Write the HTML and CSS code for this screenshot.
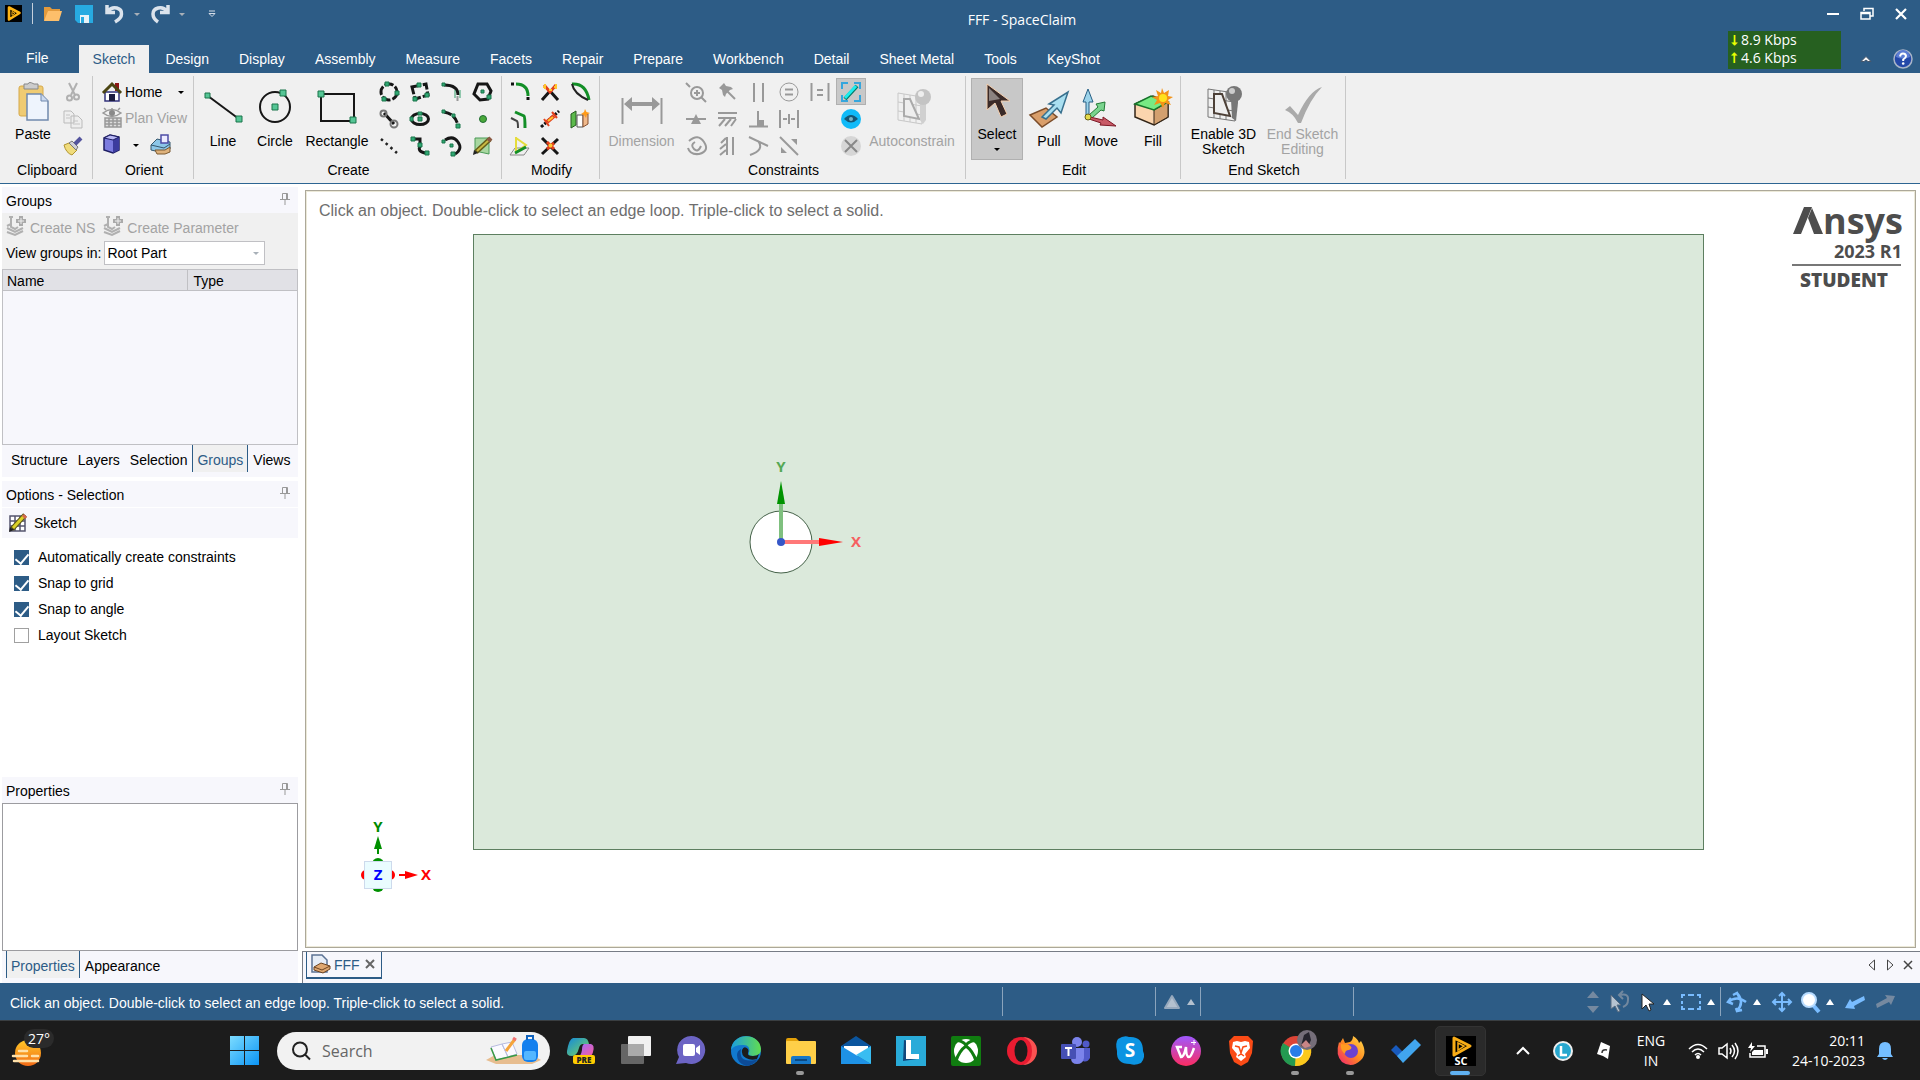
FILE: index.html
```html
<!DOCTYPE html>
<html lang="en">
<head>
<meta charset="utf-8">
<title>FFF - SpaceClaim</title>
<link rel="stylesheet" href="styles.css">
</head>
<body>
<header class="titlebar">
  <div class="title-row">
    <div class="quick">
      <svg class="app-logo" width="17" height="17" viewBox="0 0 17 17"><rect width="17" height="17"/><path d="M4 2.500 14.500 8 4 14.500z" fill="none" stroke="#fdb515" stroke-width="2.600" stroke-linejoin="round"/><path d="M7 6.500 10 8.300 7 10.300z" fill="none" stroke="#fdb515"/></svg>
      <span class="quick-line"></span>
      <button class="qa" aria-label="Open"><svg width="20" height="18" viewBox="0 0 20 18"><path d="M1 16V2h6l2 2h8v3" fill="#e39a3c"/><path d="M1 16 5 6h14l-3 10z" fill="#fdbf6b"/></svg></button>
      <button class="qa save" aria-label="Save"><svg width="18" height="18" viewBox="0 0 18 18"><path d="M0 0h18v18H3l-3-3z" fill="#27aae1"/><path d="M5 10h9v8H5z" fill="#e8f2f8"/><path d="M6 12h3v6H6z" fill="#27aae1"/></svg></button>
      <button class="qa" aria-label="Undo"><svg width="20" height="18" viewBox="0 0 20 18"><path d="M3 6C8 0 17 3 16.500 9c0 4-3 6-6.500 8M2 0v7.500h8" fill="none" stroke="#dbe3ec" stroke-width="3.500"/></svg></button>
      <span class="caret dim"></span>
      <button class="qa" aria-label="Redo"><svg width="20" height="18" viewBox="0 0 20 18"><path d="M17 6C12 0 3 3 3 9c0 4 2 6 5 8M18 0v7.500h-8" fill="none" stroke="#dbe3ec" stroke-width="3.500"/></svg></button>
      <span class="caret dim"></span>
      <button class="qa more" aria-label="Customize toolbar"><svg width="8" height="8" viewBox="0 0 8 8"><path d="M1 1h6M1 3.500h6L4 6.500z" fill="none" stroke="#d5dde8"/></svg></button>
    </div>
    <h1>FFF - SpaceClaim</h1>
    <div class="window-controls">
      <button aria-label="Minimize"><svg width="14" height="14" viewBox="0 0 14 14"><path d="M1 7h12" stroke="#fff" stroke-width="2"/></svg></button>
      <button aria-label="Restore"><svg width="14" height="14" viewBox="0 0 14 14"><path d="M4 4V1.500h9V9h-3" fill="none" stroke="#fff" stroke-width="1.500"/><path d="M1 5.500h9V12H1zM1 6.500h9" fill="none" stroke="#fff" stroke-width="1.500"/></svg></button>
      <button aria-label="Close"><svg width="14" height="14" viewBox="0 0 14 14"><path d="M2 2l10 10M12 2 2 12" stroke="#fff" stroke-width="2.200"/></svg></button>
    </div>
  </div>
  <nav class="tab-row">
    <a class="file" href="#">File</a><a class="active" href="#">Sketch</a><a href="#">Design</a><a href="#">Display</a><a href="#">Assembly</a><a href="#">Measure</a><a href="#">Facets</a><a href="#">Repair</a><a href="#">Prepare</a><a href="#">Workbench</a><a href="#">Detail</a><a href="#">Sheet Metal</a><a href="#">Tools</a><a href="#">KeyShot</a>
    <div class="tab-tools">
      <button aria-label="Collapse ribbon"><svg width="12" height="8" viewBox="0 0 12 8"><path d="M1 6.500 6 1.500l5 5H8L6 5 4 6.500z" fill="#fff" stroke="#46566b"/></svg></button>
      <button aria-label="Help"><svg width="20" height="20" viewBox="0 0 20 20"><circle cx="10" cy="10" r="9" fill="#2448a8" stroke="#a8b4c8" stroke-width="1.500"/><path d="M3 8a7 7 0 0 1 14 0q-7 3-14 0" fill="#5c7dd4"/><path d="M7 7.500q.5-3 3-3t3 2.500q0 1.800-2.800 3.500V12" fill="none" stroke="#fff" stroke-width="2"/><circle cx="10.200" cy="14.500" r="1.300" fill="#fff"/></svg></button>
    </div>
  </nav>
  <div class="net-meter"><p><b>⭣</b>8.9 Kbps</p><p><b>⭡</b>4.6 Kbps</p></div>
</header>

<section class="ribbon" aria-label="Ribbon">
  <div class="group g-clip">
    <div class="tools">
      <button class="big high"><svg width="40" height="40" viewBox="0 0 40 40"><rect x="6" y="5" width="24" height="30" rx="2" fill="#efcb73" stroke="#d6a94b"/><path d="M11 3h4q1-3 6 0h4v5H11z" fill="#ccc" stroke="#888"/><path d="M14 13h14l7 7v19H14z" fill="#eef4fd" stroke="#7089ad" stroke-width="1.500"/><path d="M28 13v7h7" fill="#cbdaf0" stroke="#7089ad"/></svg>Paste</button>
      <div class="grid c1">
        <button aria-label="Cut"><svg viewBox="0 0 20 20"><path d="M6 1 12 13M14 1 8 13" stroke="#b0b0b0" stroke-width="2"/><circle cx="6.500" cy="16" r="2.500" class="gl"/><circle cx="13.500" cy="15" r="2.500" class="gl"/></svg></button>
        <button aria-label="Copy"><svg viewBox="0 0 20 20"><path d="M1 2h7l3 3v9H1zM8 7h7l4 4v8H8z" fill="#eee" stroke="#bbb"/><path d="M3 6h4M3 9h4M10 12h5M10 15h7" stroke="#c4c4c4"/></svg></button>
        <button aria-label="Format painter"><svg viewBox="0 0 20 20"><path d="M1 9 6 7l8 7-5 5q-6-2-8-10" fill="#f0dc7c" stroke="#b09430"/><path d="M6 7l3-2 6 6-2 3z" fill="#cfcfd8" stroke="#777"/><path d="M12 8 18 2" stroke="#54549e" stroke-width="4"/></svg></button>
      </div>
    </div>
    <h2>Clipboard</h2>
  </div>
  <div class="group g-orient">
    <div class="tools stack">
      <button class="row"><svg width="20" height="20" viewBox="0 0 20 20"><path d="M13 1h4v8h-4z" fill="#8e1616"/><path d="M3 10h14v9H3z" fill="#fff" stroke="#33337c" stroke-width="1.500"/><path d="M1 11 10 2l9 9" fill="none" stroke="#4b4512" stroke-width="3"/><path d="M7 12h6v7H7z" fill="#1c1c40"/></svg>Home<span class="caret wide"></span></button>
      <button class="row" disabled><svg width="20" height="20" viewBox="0 0 20 20"><path d="M1 5q9-7 18 0-9 7-18 0zM4 2 2 0M10 2V0M16 2l2-2" fill="none" stroke="#999" stroke-width="1.500"/><circle cx="10" cy="5" r="3" fill="#8a8a8a"/><path d="M3 10h16v9H3zM3 13h16M3 16h16M7 10v9M11 10v9M15 10v9" fill="#ddd" stroke="#999" stroke-width="1.500"/></svg>Plan View</button>
      <div class="row"><button aria-label="View cube"><svg width="20" height="20" viewBox="0 0 20 20"><path d="M2 4 8 1l9 2v13l-6 3-9-3z" fill="#7c7cdf" stroke="#1d1d62" stroke-width="1.500"/><path d="M11 6v13l6-3V3z" fill="#3c3c9e"/><path d="M2 4l9 2 6-3-9-2z" fill="#b9b9f5" stroke="#1d1d62"/></svg></button><span class="caret near"></span><button aria-label="Sketch plane"><svg width="22" height="20" viewBox="0 0 22 20"><path d="M1 11 7 5l13 3v7l-6 4-13-3z" fill="#8cc6e8" stroke="#35576d"/><path d="M1 11l13 3 6-4" fill="none" stroke="#35576d"/><path d="M5 16h10l5-3v5l-5 2H7z" fill="#deb27c" stroke="#7c5a30"/><path d="M11 1h7v8h-7z" fill="#ecebff" stroke="#4c4ca5" stroke-width="1.500"/></svg></button></div>
    </div>
    <h2>Orient</h2>
  </div>
  <div class="group g-create">
    <div class="tools">
      <button class="big"><svg width="40" height="40" viewBox="0 0 40 40"><path d="M5 8 36 31" class="k2"/><path class="n" d="M2 5h5v5H2zM33 28h6v6h-6z"/></svg>Line</button>
      <button class="big"><svg width="40" height="40" viewBox="0 0 40 40"><circle cx="20" cy="19" r="15" class="k2"/><path class="n" d="M17 16h6v6h-6zM25 2h6v6h-6z"/></svg>Circle</button>
      <button class="big wide"><svg width="40" height="40" viewBox="0 0 40 40"><path d="M4 6h33v27H4z" class="k2"/><path class="n" d="M1 3h6v6H1zM33 29h6v6h-6z"/></svg>Rectangle</button>
      <div class="grid c4">
        <button aria-label="Three-point circle"><svg viewBox="0 0 20 20"><circle cx="10" cy="10" r="8" class="k3" stroke-dasharray="9 2"/><path class="n" d="M6 0h4v4H6zM16 9h4v4h-4zM3 15h4v4H3z"/></svg></button>
        <button aria-label="Three-point rectangle"><svg viewBox="0 0 20 20"><path d="M2 5 16 2l2 11-13 4z" class="k3" stroke-dasharray="9 2"/><path class="n" d="M7 1h4v4H7zM15 11h4v4h-4zM3 15h4v4H3z"/></svg></button>
        <button aria-label="Tangent arc"><svg viewBox="0 0 20 20"><path d="M3 3q14 0 14 10" class="k3"/><path d="M14 8v8M19 8v8" stroke="#35a06c"/><path d="M16.500 14v5" stroke="#999" stroke-width="2"/><path class="n" d="M1 1h3v3H1z"/></svg></button>
        <button aria-label="Polygon"><svg viewBox="0 0 20 20"><path d="M6 2h9l4 7-3 8-8 1-6-6z" class="k3"/><path class="n" d="M9 8h3v3H9zM15 13h4v4h-4z"/></svg></button>
        <button aria-label="Tangent line"><svg viewBox="0 0 20 20"><path d="M5 4 15 15" class="k3"/><circle cx="4.500" cy="4.500" r="3" fill="none" stroke="#777" stroke-width="2"/><circle cx="15" cy="15" r="3.500" fill="none" stroke="#777" stroke-width="2"/></svg></button>
        <button aria-label="Ellipse"><svg viewBox="0 0 20 20"><ellipse cx="10" cy="10" rx="8.500" ry="5.500" class="k3"/><path class="n" d="M8 3h4v3H8zM8 8h4v4H8zM0 8h3v4H0z"/></svg></button>
        <button aria-label="Three-point arc"><svg viewBox="0 0 20 20"><path d="M3 3q12 2 14 14" class="k3" stroke-dasharray="8 2"/><path class="n" d="M1 1h3v3H1zM11 5h3v3h-3zM15 15h4v4h-4z"/></svg></button>
        <button aria-label="Point"><svg viewBox="0 0 20 20"><circle cx="11" cy="10" r="3.500" fill="#4aa83a" stroke="#206d32"/></svg></button>
        <button aria-label="Construction line"><svg viewBox="0 0 20 20"><path d="M2 3 18 17" stroke="#222" stroke-width="2.500" stroke-dasharray="2.500 3.800"/></svg></button>
        <button aria-label="Spline"><svg viewBox="0 0 20 20"><path d="M3 3h7v7q-3 6 6 7" class="k3"/><path class="n" d="M1 1h4v4H1zM8 7h4v4H8zM15 15h4v4h-4z"/></svg></button>
        <button aria-label="Sweep arc"><svg viewBox="0 0 20 20"><path d="M4 4Q12-1 17 6t-3 12" class="k3"/><path class="n" d="M1 4h3v3H1zM9 8h3v3H9zM10 16h4v4h-4z"/></svg></button>
        <button aria-label="Face curve"><svg viewBox="0 0 20 20"><path d="M3 2h14v16L3 15z" fill="#a8d7a0" stroke="#4a9a56"/><path d="M4 16 18 3" stroke="#635b18" stroke-width="5"/><path d="M5 15 17 4" stroke="#c9b842" stroke-width="2"/><path d="M1 19l1-5 4 3z" fill="#222"/><path d="M16 2l3 3" stroke="#8c5a44" stroke-width="4"/></svg></button>
      </div>
    </div>
    <h2>Create</h2>
  </div>
  <div class="group g-modify">
    <div class="tools">
      <div class="grid c3">
        <button aria-label="Round corner"><svg viewBox="0 0 20 20"><path d="M6 2q12 0 12 12" class="gr"/><path d="M1 2h4M18 15v4" stroke="#111" stroke-width="3" stroke-dasharray="3 1"/></svg></button>
        <button aria-label="Trim away"><svg viewBox="0 0 20 20"><path d="M2 18 10 9l8 9" class="k3"/><path d="M4 3l6 7 6-7" fill="none" stroke="#e3401c" stroke-width="3"/><path d="M3 5h3M14 5h3M9 8h3M5 2v5M16 2v5" stroke="#ffc52e" stroke-width="2"/></svg></button>
        <button aria-label="Create corner"><svg viewBox="0 0 20 20"><path d="M2 2Q16 1 19 18" class="gr"/><path d="M2 2Q4 12 18 18" fill="none" stroke="#222" stroke-width="2"/></svg></button>
        <button aria-label="Offset curve"><svg viewBox="0 0 20 20"><path d="M5 3l9 4q1 1 1 12" class="gr"/><path d="M1 9l6 3q1 1 1 7" fill="none" stroke="#444" stroke-width="2"/></svg></button>
        <button aria-label="Split curve"><svg viewBox="0 0 20 20"><path d="M1 18 19 2" class="k3" stroke-dasharray="3 1.500"/><path d="M7 13 14 7" stroke="#e3401c" stroke-width="4"/><path d="M4 10l5 7M12 3l5 6" stroke="#e3401c" stroke-width="2"/><path d="M8 12 13 8" stroke="#ffc52e" stroke-width="2"/></svg></button>
        <button aria-label="Project to sketch"><svg viewBox="0 0 20 20"><path d="M1 5l5-3v14l-5 3z" fill="#5cba4c" stroke="#275b20"/><path d="M7 6h6v12H7z" fill="#fff" stroke="#555"/><path d="M13 5h5v10l-5 3z" fill="#f0b98b" stroke="#875031"/><path d="M15 0l1.500 3L20 4l-3 1.500L16 9l-2-3-3-1 3-2z" fill="#ff9b19"/></svg></button>
        <button aria-label="Bend"><svg viewBox="0 0 20 20"><path d="M5 12h14l-5 7H0z" fill="#eee" stroke="#888"/><path d="M6 1v15L16 9 6 2" fill="none" stroke="#e5dc3c" stroke-width="2"/><path d="M5 17 16 11" class="gr"/></svg></button>
        <button aria-label="Scale"><svg viewBox="0 0 20 20"><path d="M2 18 18 3M2 2l16 16" class="k3"/><path d="M7 6l7 7M7 13l7-6" stroke="#e3401c" stroke-width="3"/><circle cx="10.500" cy="9.500" r="2" fill="#ffc52e"/></svg></button>
      </div>
    </div>
    <h2>Modify</h2>
  </div>
  <div class="group g-constraints">
    <div class="tools">
      <button class="big dim-btn" disabled><svg width="42" height="40" viewBox="0 0 42 40"><path d="M1.500 10v26M40.500 10v26" class="gs"/><path d="M8 16h26" stroke="#999" stroke-width="4"/><path d="M3 16 11 9v14zM39 16 31 9v14z" fill="#999"/></svg>Dimension</button>
      <div class="grid c6">
        <button disabled aria-label="Inspect"><svg viewBox="0 0 20 20"><circle cx="11" cy="11" r="6" class="gs"/><path d="M15 15l5 5M0 1l4 4M8 11h6M11 8v6" class="gs"/></svg></button>
        <button disabled aria-label="Fix"><svg viewBox="0 0 20 20"><path d="M2 6 7 1l2 3 5 1 2 2-3 1-4 4-1 3-2-2-1-5z" fill="#999"/><path d="M10 9l8 8" class="gs"/></svg></button>
        <button disabled aria-label="Parallel"><svg viewBox="0 0 20 20"><path d="M6 1v19M15 1v19" class="gs"/></svg></button>
        <button disabled aria-label="Equal radius"><svg viewBox="0 0 20 20"><circle cx="10" cy="10" r="9" class="gs thin"/><path d="M6 7.500h8M6 12.500h8" class="gs"/></svg></button>
        <button disabled aria-label="Equal distance"><svg viewBox="0 0 20 20"><path d="M1.500 1v18M18.500 1v18M7 8h6M7 13h6" class="gs"/></svg></button>
        <button class="toggle" aria-label="Toggle constraints"><svg viewBox="0 0 20 20"><path d="M1 7V1h6M13 1h6v6M19 13v6h-6M7 19H1v-6" fill="none" stroke="#35a6dd" stroke-width="2"/><path d="M4 17 16 4" stroke="#076" stroke-width="4"/><path d="M4 16 15 4" stroke="#1cecec" stroke-width="3"/></svg></button>
        <button disabled aria-label="Midpoint"><svg viewBox="0 0 20 20"><path d="M0 10h20" class="gs"/><path d="M5 15l5-10 5 10z" fill="#999"/></svg></button>
        <button disabled aria-label="Horizontal"><svg viewBox="0 0 20 20"><path d="M1 4h19M1 9h18M8 10l-6 7M14 10l-6 7M19 10l-5 7" class="gs"/></svg></button>
        <button disabled aria-label="Perpendicular"><svg viewBox="0 0 20 20"><path d="M1 17.500h19M10 2v15" class="gs"/><path d="M10 11h6v7h-6z" fill="#999"/></svg></button>
        <button disabled aria-label="Symmetric"><svg viewBox="0 0 20 20"><path d="M1 1v18M19 1v18M10 5v10M4 10h4M12 10h4" class="gs"/></svg></button>
        <span></span>
        <button aria-label="Show constraints"><svg viewBox="0 0 20 20"><circle cx="10" cy="10" r="10" fill="#10baf8"/><path d="M3 10q7-8 14 0-7 7-14 0" fill="#165674"/><circle cx="10" cy="10" r="2" fill="#79b3c5"/></svg></button>
        <button disabled aria-label="Concentric"><svg viewBox="0 0 20 20"><path d="M3 5Q12-3 18 6t-5 12Q4 19 2 12M9 6q-5 3-1 7t7-3" class="gs"/></svg></button>
        <button disabled aria-label="Vertical"><svg viewBox="0 0 20 20"><path d="M16 1v18M10 1v18M9 2 4 7M9 8l-6 5M9 14l-6 5" class="gs"/></svg></button>
        <button disabled aria-label="Tangent"><svg viewBox="0 0 20 20"><path d="M1 1l19 9M2 19q15-5 8-14" class="gs"/></svg></button>
        <button disabled aria-label="Equal"><svg viewBox="0 0 20 20"><path d="M1 1l18 18" class="gs"/><path d="M12 3h6v6zM2 11v6h6z" fill="#999"/></svg></button>
        <span></span>
        <button disabled aria-label="Delete constraints"><svg viewBox="0 0 20 20"><circle cx="10" cy="10" r="10" fill="#d6d6d6"/><path d="M4 4l12 12M16 4 4 16" stroke="#888" stroke-width="2"/></svg></button>
      </div>
      <button class="big auto" disabled><svg width="40" height="40" viewBox="0 0 40 40"><path d="M6 5v27l24 4V9zM12 6v27M18 7v27M24 8v27M6 14l24 4M6 23l24 4" fill="none" stroke="#c8c8c8"/><path d="M12 11h6l9 20-15-3z" fill="#eee" stroke="#aaa" stroke-width="2"/><path d="M28 14h6v18l-3 4-3-4z" fill="#d0d0d0"/><circle cx="31" cy="9" r="8" fill="#c4c4c4"/><circle cx="29" cy="6" r="3" fill="#eee"/></svg>Autoconstrain</button>
    </div>
    <h2>Constraints</h2>
  </div>
  <div class="group g-edit">
    <div class="tools">
      <button class="big high pressed"><svg width="40" height="40" viewBox="0 0 40 40"><path d="M10 3v26l8-7 6 14 6-3-6-13h9z" fill="#3a2a28" stroke="#f5cfae"/><path d="M12 7v13l11-2z" fill="#8c8280"/></svg>Select<span class="caret"></span></button>
      <button class="big"><svg width="40" height="40" viewBox="0 0 40 40"><path d="M1 27 17 20l11 9-15 10z" fill="#d99e6a" stroke="#7b4c29" stroke-width="1.500"/><path d="M13 29 25 17l-5-1L39 4 32 25l-4-5-11 11z" fill="#a9dff0" stroke="#38708e" stroke-width="1.500"/></svg>Pull</button>
      <button class="big"><svg width="40" height="40" viewBox="0 0 40 40"><path d="M5 28V14H2L7 1l5 13H8v14z" fill="#9cd3ea" stroke="#275f84"/><path d="M8 27l9-8-2-3 9-2-1 9-3-1-9 8z" fill="#7ad48e" stroke="#237a36"/><path d="M9 29l13 3v-3l13 9-16-1 1-2-12-4z" fill="#c95a66" stroke="#7e1926"/><circle cx="7" cy="29" r="3" fill="#e3da4b" stroke="#665f18"/></svg>Move</button>
      <button class="big"><svg width="40" height="40" viewBox="0 0 40 40"><path d="M2 16 20 8l15 6v15l-14 8L2 29z" fill="#fbd5ae" stroke="#322518" stroke-width="1.500"/><path d="M21 22v15l14-8V14z" fill="#d3a06f" stroke="#322518"/><path d="M2 16 18 8l17 6-14 8z" fill="#77eb83" stroke="#17742a" stroke-width="1.500"/><path d="M29 0l2 5 5-3-1 6 5 1-5 3 3 5-6-2-2 5-3-5-6 2 3-5-5-3 6-1-2-6 5 3z" fill="#f39317"/><circle cx="30" cy="10" r="4" fill="#ffe11b"/></svg>Fill</button>
    </div>
    <h2>Edit</h2>
  </div>
  <div class="group g-end">
    <div class="tools">
      <button class="big high end-btn"><svg width="40" height="40" viewBox="0 0 40 40"><path d="M4 4v28l27 4V8zM10 5v28M16 6v28M22 7v28M4 13l26 4M4 22l26 4" fill="none" stroke="#777"/><path d="M10 9h8l8 22-16-3z" fill="#eee" stroke="#4d4037" stroke-width="2"/><path d="M27 14h7v4l-2 18-4-3z" fill="#777"/><circle cx="30" cy="9" r="8" fill="#777"/><circle cx="28" cy="6" r="3" fill="#ccc"/></svg>Enable 3D<br>Sketch</button>
      <button class="big high end-btn" disabled><svg width="40" height="40" viewBox="0 0 40 40"><path d="M2 25l5-4 8 9Q26 6 39 2 27 14 18 38h-3Q10 28 2 25z" fill="#aaa"/></svg>End Sketch<br>Editing</button>
    </div>
    <h2>End Sketch</h2>
  </div>
</section>

<main class="workspace">
  <aside class="side">
    <section class="groups-panel">
      <header class="panel-head"><h3>Groups</h3><button class="pin" aria-label="Pin Groups"><svg width="10" height="12" viewBox="0 0 10 12"><path d="M2.500 6V.500h5V6M6.500 1v5M0 6.500h10M5 7v5" fill="none" stroke="#999"/></svg></button></header>
      <div class="group-tools">
        <button disabled><svg width="20" height="20" viewBox="0 0 20 20"><path d="M1 10l4-2M1 12l8 4 8-4M1 16l8 3 8-4M5 1v10l4 2 3-2M3 1h4" fill="none" stroke="#b0b0b0" stroke-width="2"/><path d="M15 0v10M10 5h10" stroke="#aaa" stroke-width="4"/><path d="M15 2v6M12 5h6" stroke="#eee"/></svg>Create NS</button>
        <button disabled><svg width="20" height="20" viewBox="0 0 20 20"><path d="M1 10l4-2M1 12l8 4 8-4M1 16l8 3 8-4M5 1v10l4 2 3-2M3 1h4" fill="none" stroke="#b0b0b0" stroke-width="2"/><path d="M15 0v10M10 5h10" stroke="#aaa" stroke-width="4"/><path d="M15 2v6M12 5h6" stroke="#eee"/></svg>Create Parameter</button>
      </div>
      <div class="view-row"><label for="scope">View groups in:</label><div class="combo"><select id="scope"><option>Root Part</option></select><span class="caret dim"></span></div></div>
      <div class="list"><table><thead><tr><th>Name</th><th>Type</th></tr></thead></table></div>
      <nav class="side-tabs"><a href="#">Structure</a><a href="#">Layers</a><a href="#">Selection</a><a class="on" href="#">Groups</a><a href="#">Views</a></nav>
    </section>
    <section class="options-panel">
      <header class="panel-head"><h3>Options - Selection</h3><button class="pin" aria-label="Pin Options"><svg width="10" height="12" viewBox="0 0 10 12"><path d="M2.500 6V.500h5V6M6.500 1v5M0 6.500h10M5 7v5" fill="none" stroke="#999"/></svg></button></header>
      <div class="sketch-head"><svg width="20" height="20" viewBox="0 0 20 20"><path d="M2 3h15v15H2zM7 3v15M12 3v15M2 8h15M2 13h15" fill="#fff" stroke="#55556e" stroke-width="1.500"/><path d="M4 16 17 2" stroke="#5b5415" stroke-width="5"/><path d="M5 15 16 3" stroke="#dbd228" stroke-width="3"/><path d="M1 19l1-5 4 3z" fill="#222"/><path d="M15 2l3 3" stroke="#d4674e" stroke-width="3"/></svg>Sketch</div>
      <div class="checks">
        <label><input type="checkbox" checked>Automatically create constraints</label>
        <label><input type="checkbox" checked>Snap to grid</label>
        <label><input type="checkbox" checked>Snap to angle</label>
        <label><input type="checkbox">Layout Sketch</label>
      </div>
    </section>
    <section class="props-panel">
      <header class="panel-head"><h3>Properties</h3><button class="pin" aria-label="Pin Properties"><svg width="10" height="12" viewBox="0 0 10 12"><path d="M2.500 6V.500h5V6M6.500 1v5M0 6.500h10M5 7v5" fill="none" stroke="#999"/></svg></button></header>
      <div class="props-box"></div>
      <nav class="side-tabs"><a class="on" href="#">Properties</a><a href="#">Appearance</a></nav>
    </section>
  </aside>
  <section class="document">
    <div class="canvas">
      <svg class="drawing" width="100%" height="100%">
        <rect x="167.500" y="43.500" width="1230" height="615" fill="#dbe9db" stroke="#5d7f60"/>
        <g transform="translate(475 351)">
          <circle r="31" fill="#fff" stroke="#446148"/>
          <path d="M0 0v-40" stroke="#7fc07f" stroke-width="4"/><path d="M0-61l4 23h-8z" fill="#009300"/>
          <path d="M0 0h40" stroke="#ff7878" stroke-width="4"/><path d="M62 0 38 4v-8z" fill="#f00"/>
          <circle r="4" fill="#3657c8"/>
          <text y="-70" class="axis" fill="#55a855">Y</text><text x="75" y="5" class="axis" fill="#f66060">X</text>
        </g>
        <g transform="translate(72 684)">
          <circle cy="-11" r="6" fill="#009000"/><circle cy="11" r="6" fill="#009000"/><circle cx="-12" r="5" fill="#f00"/><circle cx="12" r="5" fill="#f00"/>
          <rect x="-13.500" y="-13.500" width="27" height="27" fill="#eafcff" stroke="#cddaec"/>
          <path d="M0-21v-7" stroke="#009000" stroke-width="2"/><path d="M0-39l4 13h-8z" fill="#009000"/>
          <path d="M21 0h7" stroke="#f00" stroke-width="2"/><path d="M40 0 27 4v-8z" fill="#f00"/>
          <text y="-43" class="axis" fill="#008a00">Y</text><text x="48" y="5" class="axis" fill="#f00">X</text><text y="5" class="axis" fill="#00f">Z</text>
        </g>
      </svg>
      <p class="hint">Click an object. Double-click to select an edge loop. Triple-click to select a solid.</p>
      <svg class="brand" width="114" height="90" viewBox="0 0 114 90" aria-label="Ansys 2023 R1 Student">
        <path d="M1 32 12 5h8L9 32zM20 6l11 26H22L16 16z" fill="#4d4d4d"/>
        <text x="31" y="32" class="b1">nsys</text><text x="110" y="56" class="b2">2023 R1</text>
        <path d="M0 63h109" stroke="#777" stroke-width="2"/><text x="96" y="85" class="b3">STUDENT</text>
      </svg>
    </div>
    <div class="doc-bar">
      <div class="doc-tab"><svg width="20" height="20" viewBox="0 0 20 20"><path d="M1 1h10l5 5v12H1z" fill="#e6edf7" stroke="#5c7394" stroke-width="1.500"/><path d="M3 13l7-4 9 3v3l-7 4-9-3z" fill="#dfa770" stroke="#6d4421"/><path d="M3 13l8 3 8-4" fill="none" stroke="#6d4421"/></svg><a href="#">FFF</a><button aria-label="Close FFF"><svg width="10" height="10" viewBox="0 0 10 10"><path d="M1 1l8 8M9 1 1 9" stroke="#666" stroke-width="2"/></svg></button></div>
      <div class="doc-nav">
        <button aria-label="Previous"><svg width="10" height="12" viewBox="0 0 10 12"><path d="M7.500 1v10L2 6z" fill="none" stroke="#444"/></svg></button>
        <button aria-label="Next"><svg width="10" height="12" viewBox="0 0 10 12"><path d="M2.500 1v10L8 6z" fill="none" stroke="#444"/></svg></button>
        <button aria-label="Close document"><svg width="10" height="12" viewBox="0 0 10 12"><path d="M1 2l8 8M9 2l-8 8" stroke="#444" stroke-width="1.500"/></svg></button>
      </div>
    </div>
  </section>
</main>

<footer class="status">
  <p>Click an object. Double-click to select an edge loop. Triple-click to select a solid.</p>
  <span class="seg long"></span>
  <span class="seg warn"><svg width="18" height="16" viewBox="0 0 18 16"><path d="M9 2 16 14H2z" fill="#b4c1cf" stroke="#97a9bd" stroke-width="2" stroke-linejoin="round"/></svg><span class="up pale"></span></span>
  <span class="seg long"></span>
  <div class="seg view-tools">
    <button aria-label="Scroll selection"><svg viewBox="0 0 20 22"><path d="M10 0l6 7H4zM10 22l6-7H4z" fill="#7589a0"/></svg></button>
    <button aria-label="Undo selection"><svg viewBox="0 0 20 22"><path d="M1 4v14l4-3 3 6 2-1-3-6h4z" fill="#b6c3d0" stroke="#576b80"/><path d="M10 4q9-2 8 5 0 5-5 7M13 0l-4 4 4 4" fill="none" stroke="#72889f" stroke-width="2"/></svg></button>
    <button aria-label="Select mode"><svg viewBox="0 0 20 22"><path d="M5 3v15l4-4 3 6 2-1-2-6h5z" fill="#fff" stroke="#222"/></svg></button><span class="up"></span>
    <button class="box-mode" aria-label="Box select"><svg viewBox="0 0 20 22"><path d="M1 7V4h3M7 4h6M16 4h3v3M19 10v3M19 15v3h-3M13 18H7M4 18H1v-3M1 13v-3" fill="none" stroke="#79bcff" stroke-width="2"/></svg></button><span class="up"></span>
    <span class="divider"></span>
    <button aria-label="Spin"><svg viewBox="0 0 20 22"><path d="M1 11q9-7 18 0M10 2q8 9 0 18M4 7l-3 4 5 2M6 4l4-2 2 4M9 17l1 3 5-1" fill="none" stroke="#79bcff" stroke-width="2.500"/></svg></button><span class="up"></span>
    <button class="pan" aria-label="Pan"><svg viewBox="0 0 20 22"><path d="M10 2v18M1 11h18M7 5l3-3 3 3M7 17l3 3 3-3M4 8l-3 3 3 3M16 8l3 3-3 3" fill="none" stroke="#79bcff" stroke-width="2"/></svg></button>
    <button class="zoom" aria-label="Zoom"><svg viewBox="0 0 20 22"><path d="M13 14l6 7" stroke="#79bcff" stroke-width="4"/><circle cx="9" cy="9" r="7" fill="#fff" stroke="#b6dbff" stroke-width="2"/></svg></button><span class="up"></span>
    <button class="pan" aria-label="Previous view"><svg viewBox="0 0 20 22"><path d="M0 17l5-9 2 3 12-6 1 4-11 6 1 3z" fill="#79bcff"/></svg></button>
    <button class="pan" aria-label="Next view"><svg viewBox="0 0 20 22"><path d="M20 5 10 4l2 3-11 6 1 4 12-6 2 3z" fill="#7589a0"/></svg></button>
  </div>
</footer>

<nav class="taskbar" aria-label="Taskbar">
  <div class="weather"><svg width="42" height="40" viewBox="0 0 42 40"><defs><linearGradient id="sun" x2="0" y2="1"><stop stop-color="#ffc928"/><stop offset="1" stop-color="#f26a16"/></linearGradient></defs><circle cx="16" cy="22" r="13" fill="url(#sun)"/><path d="M7 20h8M1 25h14M20 25h6M2 30h24" stroke="#ffe0a8" stroke-width="2.500" stroke-linecap="round"/></svg><span>27°</span></div>
  <button class="cell" aria-label="Start"><svg width="30" height="30" viewBox="0 0 30 30"><defs><linearGradient id="win" x2="1" y2="1"><stop stop-color="#7cdcff"/><stop offset="1" stop-color="#0b94f5"/></linearGradient></defs><path d="M0 0h14v14H0zM15 0h14v14H15zM0 15h14v14H0zM15 15h14v14H15z" fill="url(#win)"/></svg></button>
  <div class="search"><svg width="20" height="20" viewBox="0 0 20 20"><circle cx="9" cy="8.500" r="7" fill="none" stroke="#222" stroke-width="2"/><path d="M14 13.500l5 5" stroke="#222" stroke-width="2"/></svg><input type="text" placeholder="Search" aria-label="Search">
    <svg width="60" height="34" viewBox="0 0 60 34"><path d="M2 26l9-5h37l9 5-9 4H12z" fill="#e7bd8f"/><path d="M7 13l11-3 6 13-12 3zM18 10l10-2 5 12-9 3z" fill="#fbfaff" stroke="#b8bce0"/><path d="M7 14l5 12 21-5" fill="none" stroke="#399a45" stroke-width="1.500"/><path d="M22 17 31 5" stroke="#f5a43a" stroke-width="3"/><path d="M29 4l3 2" stroke="#f27272" stroke-width="3"/><rect x="38" y="5" width="16" height="23" rx="6" fill="#1480ee"/><rect x="40" y="17" width="12" height="9" rx="2" fill="#54b7ff"/><path d="M43 6V2h6v4" fill="none" stroke="#0f62bd" stroke-width="2"/></svg></div>
  <button class="cell" aria-label="Copilot"><svg viewBox="0 0 30 30"><defs><linearGradient id="cpa" x2="1" y2="1"><stop stop-color="#1389dd"/><stop offset="1" stop-color="#7dd957"/></linearGradient><linearGradient id="cpb" x2="1" y2="1"><stop stop-color="#9b6cff"/><stop offset="1" stop-color="#fa5b9b"/></linearGradient></defs><path d="M7 2h11q4 0 5 6h-6q-3 0-4 4-2 8-7 8-6 0-5-5Q3 3 7 2z" fill="url(#cpa)"/><path d="M18 8h7q4 1 2 8-1 5-6 5H12q3-1 4-7 0-5 2-6z" fill="url(#cpb)"/><rect x="7" y="19" width="22" height="9" rx="2" fill="#fc0"/><text x="18" y="27" class="pre">PRE</text></svg></button>
  <button class="cell" aria-label="Task view"><svg viewBox="0 0 30 30"><rect x="7" y="0" width="23" height="20" rx="1" fill="#f1f1f1"/><rect x="0" y="8" width="23" height="20" rx="1" fill="#666"/><path d="M7 8h16v12H7z" fill="#aaa"/></svg></button>
  <button class="cell" aria-label="Chat"><svg viewBox="0 0 30 30"><path d="M15 0a14 14 0 1 1-5 27L0 28l3-7A14 14 0 0 1 15 0z" fill="#6c64c4"/><rect x="7" y="8" width="12" height="12" rx="2" fill="#fff"/><path d="M20 12l4-3v10l-4-3z" fill="#fff"/></svg></button>
  <button class="cell" aria-label="Edge"><svg viewBox="0 0 30 30"><defs><linearGradient id="edg" x2="1"><stop stop-color="#1a9de0"/><stop offset="1" stop-color="#62dd4f"/></linearGradient></defs><circle cx="15" cy="15" r="15" fill="#1179ce"/><path d="M0 14C1-4 29-4 30 13q0 7-8 7-5 0-4-3 2-9-7-8Q3 9 0 14z" fill="url(#edg)"/><path d="M10 13q-3 14 14 11 3-1 3-1-5 7-12 7-9-3-9-11 0-4 4-6z" fill="#0c4b97"/><path d="M11 14q2-5 6-1 1 2 0 4-1 3 5 3 4 0 6-2l-2 5q-6 2-11-1t-4-8z" fill="#1c1c1c"/></svg></button>
  <button class="cell run" aria-label="File Explorer"><svg viewBox="0 0 30 30"><path d="M0 4q0-2 2-2h8l3 3v5H0z" fill="#e3a008"/><rect y="5" width="30" height="23" rx="1" fill="#ffcf48"/><path d="M5 28v-6q0-2 2-2h16q2 0 2 2v6z" fill="#1778c8"/><path d="M9 24h12" stroke="#0c4a83" stroke-width="2"/></svg></button>
  <button class="cell" aria-label="Mail"><svg viewBox="0 0 30 30"><path d="M0 10 15 0l15 10v18H0z" fill="#0b559e"/><path d="M3 10h24v10H3z" fill="#fff"/><path d="M0 10l30 18H0z" fill="#1e92e6"/><path d="M30 10v18L15 19z" fill="#39bdf1"/></svg></button>
  <button class="cell" aria-label="L app"><svg viewBox="0 0 30 30"><path d="M0 0h30v30H0z" fill="#29abd9"/><path d="M8 4l4 1v16l9 2-14 2z" fill="#12487c"/><path d="M10 4h5v14h8v5H10z" fill="#fff"/></svg></button>
  <button class="cell" aria-label="Xbox"><svg viewBox="0 0 30 30"><rect width="30" height="30" rx="2" fill="#107c10"/><circle cx="15" cy="15" r="12" fill="#fff"/><path d="M6 5q4-1 9 4 5-5 9-4M5 25Q8 15 15 10q7 5 10 15" fill="none" stroke="#107c10" stroke-width="3"/></svg></button>
  <button class="cell" aria-label="Opera"><svg viewBox="0 0 30 30"><circle cx="15" cy="15" r="14" fill="#e91c31"/><path d="M17 1a14 14 0 0 1 0 28q9-3 9-14T17 1" fill="#fa5252"/><ellipse cx="15" cy="15" rx="6.500" ry="11" fill="#1c1c1c"/></svg></button>
  <button class="cell" aria-label="Teams"><svg viewBox="0 0 30 30"><circle cx="16" cy="6" r="5" fill="#7b83eb"/><circle cx="25" cy="8" r="3.500" fill="#5059c9"/><path d="M20 12h9v10q-3 5-7 3z" fill="#5059c9"/><path d="M10 12h13v10q-1 6-7 6t-6-6z" fill="#7b83eb"/><rect x="0" y="8" width="15" height="15" rx="1" fill="#4650b5"/><path d="M4 12h7M7.500 12v8" stroke="#fff" stroke-width="2"/></svg></button>
  <button class="cell" aria-label="Skype"><svg viewBox="0 0 30 30"><path d="M2 3q6-4 11-2 14-1 14 14 3 6-2 12-6 3-11 1Q0 28 1 15-1 7 2 3z" fill="#0c94e2"/><text x="14" y="21" class="skype">S</text></svg></button>
  <button class="cell" aria-label="WPS"><svg viewBox="0 0 30 30"><defs><linearGradient id="wps" x2="0" y2="1"><stop stop-color="#9f58ff"/><stop offset="1" stop-color="#fc2c61"/></linearGradient></defs><circle cx="15" cy="15" r="15" fill="url(#wps)"/><path d="M11 11H6l4 10q3 0 5-10 0 10 3 10 2 0 5-9" fill="none" stroke="#fff" stroke-width="2.500"/><path d="M23 4v5M20 6.500h5" stroke="#fff"/></svg></button>
  <button class="cell" aria-label="Brave"><svg viewBox="0 0 30 30"><path d="M8 0h14l5 5-1 12-4 9-7 4-7-4-4-9L3 5z" fill="#fb4b16"/><path d="M7 6l4-1 4 1 4-1 4 1 1 6-5 6 1 3-5 4-5-4 1-3-5-6z" fill="#fff"/><path d="M9 10l4 1 2 6 2-6 4-1M12 20l3-2 3 2" fill="none" stroke="#fb4b16" stroke-width="1.500"/></svg></button>
  <button class="cell run" aria-label="Chrome"><svg class="chrome" viewBox="0 0 36 36"><circle cx="15" cy="21" r="15" fill="#dc4436"/><path d="M15 21 2 13a15 15 0 0 0 13 23l7-11z" fill="#249a51"/><path d="M15 21l-1 15a15 15 0 0 0 15-21H17z" fill="#fbc91d"/><circle cx="15" cy="21" r="7.500" fill="#fff"/><circle cx="15" cy="21" r="6" fill="#287de7"/><circle cx="26" cy="10" r="10" fill="#756e79"/><path d="M23 5l5-3 2 8-3 7-7-1z" fill="#26242d"/><path d="M20 15l5-5 5 6-6 2z" fill="#c98585"/></svg></button>
  <button class="cell run" aria-label="Firefox"><svg viewBox="0 0 30 30"><defs><linearGradient id="ffx" x1="1" x2="0" y2="1"><stop stop-color="#ffe14d"/><stop offset=".5" stop-color="#ff8920"/><stop offset="1" stop-color="#f01b79"/></linearGradient></defs><path d="M4 7l3-5 2 5 5-1q3-2 3-6 5 3 6 7l2-2q7 12 0 19-9 9-19 2Q-1 19 3 6z" fill="url(#ffx)"/><circle cx="15" cy="15" r="7" fill="#6a42cf"/><path d="M5 8l8 1q5 3 0 5-4 0-4 4Q4 14 5 8" fill="#ff9b22"/></svg></button>
  <button class="cell" aria-label="To Do"><svg viewBox="0 0 30 30"><path d="M0 14l5-5 9 9-5 5z" fill="#185abd"/><path d="M6 20 24 3l6 6-18 18z" fill="#41a5ee"/></svg></button>
  <button class="cell current" aria-label="SpaceClaim"><svg viewBox="0 0 30 30"><path d="M0 0h30v30H0z" fill="#000"/><path d="M8 2l16 8L8 19z" fill="none" stroke="#f9ad16" stroke-width="3" stroke-linejoin="round"/><path d="M12 7l6 3-6 4z" fill="none" stroke="#f9ad16" stroke-width="1.500"/><text x="15" y="29" class="sc">SC</text></svg></button>
  <div class="tray">
    <button aria-label="Hidden icons"><svg width="16" height="20" viewBox="0 0 16 20"><path d="M2 13l6-6 6 6" fill="none" stroke="#fff" stroke-width="2"/></svg></button>
    <button aria-label="L status"><svg width="20" height="20" viewBox="0 0 20 20"><circle cx="10" cy="10" r="9" fill="#27a7cf" stroke="#eee" stroke-width="2"/><path d="M8 5v9h6" fill="none" stroke="#fff" stroke-width="2.500"/></svg></button>
    <button aria-label="Device"><svg width="16" height="20" viewBox="0 0 16 20"><path d="M6 1l9 4-2 13-5-3-6-2z" fill="#fff"/><path d="M7 12q0-4 5-3" fill="none" stroke="#333" stroke-width="1.500"/></svg></button>
    <div class="lang">ENG<br>IN</div>
    <button class="net" aria-label="Network and battery"><svg width="20" height="20" viewBox="0 0 20 20"><path d="M1 8q9-9 18 0M4 11q6-6 12 0M7 14q3-3 6 0" fill="none" stroke="#fff" stroke-width="1.500"/><circle cx="10" cy="16" r="2" fill="#fff"/></svg><svg width="20" height="20" viewBox="0 0 20 20"><path d="M1 7h3l5-4v14l-5-4H1zM12 7q2 3 0 6M14 4q5 6 0 12M17 2q6 8 0 16" fill="none" stroke="#fff" stroke-width="1.500"/></svg><svg width="20" height="20" viewBox="0 0 20 20"><path d="M9 5h8v11H2v-4" fill="none" stroke="#fff" stroke-width="1.500"/><path d="M6 9h9v5H4v-3zM18 8h2v5h-2zM4 1 0 7h3L2 11l5-6H4z" fill="#fff"/></svg></button>
    <div class="clock">20:11<br>24-10-2023</div>
    <button aria-label="Notifications"><svg width="16" height="20" viewBox="0 0 16 20"><path d="M0 16l2-3V8q0-7 6-7t6 7v5l2 3z" fill="#75beff"/><path d="M5 17q3 4 6 0z" fill="#75beff"/></svg></button>
  </div>
</nav>
</body>
</html>
```
FILE: styles.css
```css
* { box-sizing: border-box; }
body {
  margin: 0;
  min-height: 100vh;
  display: flex;
  flex-direction: column;
  font: 14px/16px "Liberation Sans", Arial, sans-serif;
  color: #000;
  background: #fff;
}
h1, h2, h3, p { margin: 0; font-size: inherit; font-weight: normal; }
a { color: inherit; text-decoration: none; }
svg { display: block; flex: none; overflow: visible; }
button {
  margin: 0;
  padding: 0;
  border: 0;
  background: none;
  font: inherit;
  color: inherit;
}
button:disabled { color: #a3a3a3; }
.caret {
  width: 6px;
  border: 3px solid transparent;
  border-top-color: currentColor;
  border-bottom: 0;
}
.caret.dim { color: #a8b0b8; }

/* title bar and ribbon tabs */
.titlebar { position: relative; background: #2d5c86; color: #fff; }
.title-row { display: flex; height: 45px; }
.quick { display: flex; align-items: center; width: 228px; height: 27px; padding-left: 5px; }
.quick-line { width: 1px; height: 21px; margin: 0 10px; background: #c5d0dc; }
.qa { margin-right: 12px; }
.qa + .caret { margin: 2px 10px 0 -3px; }
.qa.more { margin: 0 0 0 13px; }
.title-row h1 { flex: 1; padding-top: 8px; text-align: center; font: 14px/24px "Open Sans", "Noto Sans", sans-serif; }
.window-controls { display: flex; height: 28px; padding-right: 2px; }
.window-controls button { width: 34px; display: grid; place-items: center; }
.tab-row { display: flex; height: 28px; }
.tab-row > a { padding: 0 14px; margin-right: 2px; line-height: 29px; }
.tab-row > .file { padding: 0 25px 0 26px; margin-right: 5px; line-height: 27px; }
.tab-row > .active { background: #f0f0f0; color: #2d5c86; }
.tab-tools { display: flex; align-items: center; gap: 16px; margin-left: auto; padding-right: 7px; }
.tab-tools button:first-child { margin-right: 5px; }
.net-meter {
  position: absolute;
  top: 31px;
  right: 79px;
  width: 113px;
  height: 38px;
  background: #266020;
  font: 14px/18px "Open Sans", "Noto Sans", sans-serif;
}
.net-meter b { display: inline-block; width: 13px; text-align: center; color: #e6ff00; font-family: "DejaVu Sans", sans-serif; line-height: 16px; }

/* ribbon */
.ribbon { display: flex; min-height: 111px; background: #f0f0f0; border-bottom: 1px solid #2d6592; padding: 3px 0 4px; }
.group { display: flex; flex-direction: column; border-right: 1px solid #c8c8c8; flex: none; }
.tools { display: flex; flex: 1; padding: 2px 0 0 3px; }
.group h2 { padding-left: 2px; text-align: center; line-height: 18px; }
.g-clip { width: 93px; }
.g-orient { width: 101px; }
.g-create { width: 308px; }
.g-modify { width: 98px; }
.g-constraints { width: 366px; }
.g-edit { width: 215px; }
.g-edit .tools { padding-left: 5px; }
.g-end { width: 165px; }
.big { display: flex; flex-direction: column; align-items: center; width: 52px; padding-top: 10px; height: 82px; white-space: nowrap; }
.big svg { margin-bottom: 5px; }
.big.high { padding-top: 3px; line-height: 16px; }
.big.wide { width: 72px; }
.big.dim-btn { width: 77px; }
.big.auto { width: 92px; }
.big.end-btn { width: 79px; text-align: center; display: block; line-height: 15px; }
.end-btn svg { margin: 0 auto 2px; }
.g-clip .big { width: 60px; }
.pressed { background: #c8c8c8; outline: 1px solid #b0b0b0; outline-offset: -1px; }
.pressed .caret { margin-top: 6px; }
.grid { display: grid; grid-auto-rows: 27px; justify-items: center; align-items: center; }
.grid svg { width: 20px; height: 20px; }
.c1 { grid-template-columns: 20px; }
.c3 { grid-template-columns: repeat(3, 30px); }
.c4 { grid-template-columns: repeat(4, 31px); }
.c6 { grid-template-columns: repeat(6, 31px); }
.toggle { width: 30px; height: 27px; display: grid; place-items: center; background: #c8c8c8; border: 1px solid #b0b0b0; }
.tools.stack { display: block; padding: 3px 0 0 9px; }
.row { display: flex; align-items: center; gap: 3px; height: 26px; white-space: nowrap; }
.caret.wide { margin-left: 13px; }
.caret.near { margin: 2px 8px 0; }
.k2 { fill: none; stroke: #161616; stroke-width: 2; }
.k3 { fill: none; stroke: #161616; stroke-width: 3; }
.n { fill: #55c595; stroke: #1a744a; }
.grid .n { fill: #2fa873; }
.gs { fill: none; stroke: #999; stroke-width: 2; }
.gl { fill: none; stroke: #b0b0b0; stroke-width: 2; }
.thin { stroke-width: 1; }
.gr { fill: none; stroke: #138f27; stroke-width: 3; }

/* docked panels */
.workspace { display: flex; flex: 1; }
.side { display: flex; flex-direction: column; width: 298px; padding: 3px 0 0 2px; background: #fff; }
.panel-head { display: flex; justify-content: space-between; align-items: center; height: 26px; padding: 2px 8px 0 4px; background: #f7f7fc; }
.pin { padding-bottom: 5px; }
.group-tools { display: flex; gap: 8px; height: 28px; padding-left: 4px; background: #f0f0f0; }
.group-tools button { display: flex; align-items: center; gap: 4px; padding-top: 2px; }
.group-tools svg { margin-bottom: 4px; }
.view-row { display: flex; align-items: center; gap: 3px; height: 28px; padding: 0 0 4px 4px; background: #f0f0f0; }
.combo { position: relative; width: 161px; }
.combo select { appearance: none; width: 100%; height: 24px; padding: 0 2px; border: 1px solid #c0c0c4; border-radius: 0; background: #fff; font: inherit; color: #000; }
.combo .caret { position: absolute; right: 6px; top: 11px; }
.list { height: 176px; border: 1px solid #c0c0c4; background: #f7f7fc; }
.list table { width: 100%; border-collapse: collapse; table-layout: fixed; }
.list th { height: 20px; padding: 3px 4px 0; text-align: left; font-weight: normal; background: #e1e1e6; border-bottom: 1px solid #c0c0c4; line-height: 16px; }
.list th + th { width: 110px; border-left: 1px solid #c0c0c4; padding-left: 6px; }
.side-tabs { display: flex; height: 32px; padding: 0 4px 5px; background: #f7f7fc; white-space: nowrap; }
.side-tabs a { padding: 0 5px; line-height: 31px; }
.side-tabs .on { color: #2d5c86; background: #f0f0f0; padding: 0 4px; border: solid #2d5c86; border-width: 0 1px; }
.options-panel { flex: 1; padding-top: 4px; }
.sketch-head { display: flex; align-items: center; gap: 6px; height: 30px; margin-top: 1px; padding-left: 6px; background: #f7f7fc; }
.checks { display: grid; grid-auto-rows: 18px; gap: 8px; padding: 10px 0 0 12px; }
.checks label { display: flex; align-items: center; gap: 9px; }
.checks input { appearance: none; display: grid; place-items: center; width: 15px; height: 15px; margin: 0; border: 1px solid #a0a0a0; background: #fff; }
.checks input:checked { background: #2d5c86; border-color: #2d5c86; }
.checks input:checked::after { content: ""; width: 6px; height: 11px; margin-bottom: 2px; border: solid #fff; border-width: 0 2px 2px 0; transform: rotate(40deg); }
.props-box { height: 148px; border: 1px solid #9c9ca0; background: #fff; }

/* document area */
.document { display: flex; flex-direction: column; flex: 1; min-width: 0; padding: 6px 0 0 4px; }
.canvas { position: relative; flex: 1; margin: 0 4px 3px 3px; border: 1px solid #aca899; outline: 1px solid #ece9d8; outline-offset: -2px; overflow: hidden; }
.drawing { position: absolute; inset: 0; }
.axis { font: bold 15px "Open Sans", sans-serif; text-anchor: middle; }
.hint { position: absolute; left: 13px; top: 11px; font-size: 16px; line-height: 18px; color: #6e6e6e; }
.brand { position: absolute; top: 11px; right: 9px; fill: #4d4d4d; }
.b1 { font: bold 36px "Open Sans", sans-serif; }
.b2 { font: bold 18px "Open Sans", sans-serif; text-anchor: end; }
.b3 { font: 800 19px "Open Sans", sans-serif; text-anchor: end; }
.doc-bar { display: flex; justify-content: space-between; height: 32px; border: solid #777c86; border-width: 1px 0 0 1px; background: #f7f7fc; }
.doc-tab { display: flex; align-items: center; gap: 3px; height: 27px; margin-left: 3px; padding: 0 6px 2px 4px; border: solid #2d5c86; border-width: 0 1px 2px; color: #2d5c86; }
.doc-tab a { padding-top: 3px; }
.doc-tab button { margin-left: 2px; }
.doc-nav { display: flex; gap: 8px; height: 26px; padding-right: 7px; }

/* status bar */
.status { display: flex; align-items: center; height: 37px; background: #2d5c86; color: #fff; }
.status p { flex: 1; padding: 2px 0 0 10px; }
.seg { display: flex; align-items: center; height: 29px; border-left: 1px solid #8ba4bc; }
.seg.long { width: 153px; }
.seg.warn { width: 45px; gap: 6px; padding-left: 7px; }
.up { border: 4px solid transparent; border-bottom: 6px solid #fff; border-top: 0; margin: 0 5px 0 6px; }
.up.pale { margin: 0; border-bottom-color: #b4c1cf; }
.view-tools { width: 567px; justify-content: flex-end; padding-right: 25px; }
.view-tools svg { width: 20px; height: 22px; }
.view-tools button + button { margin-left: 7px; }
.view-tools .box-mode { margin-left: 5px; }
.view-tools .pan { margin-left: 6px; }
.view-tools .pan + .pan { margin-left: 10px; }
.view-tools .pan + .zoom { margin-left: 8px; }
.divider { width: 1px; height: 29px; margin-right: 6px; background: #8ba4bc; }

/* taskbar */
.taskbar { display: flex; align-items: center; height: 60px; background: #1c1c1c; border-top: 1px solid #3a3e41; color: #fff; font: 14px/20px "Open Sans", "Noto Sans", sans-serif; }
.weather { position: relative; width: 217px; padding-left: 12px; }
.weather span { position: absolute; left: 24px; top: -2px; width: 30px; border-radius: 10px; background: #2b2b2b; text-align: center; line-height: 19px; }
.cell { position: relative; display: grid; place-items: center; width: 55px; height: 60px; flex: none; }
.cell svg { width: 30px; height: 30px; }
.cell .chrome { width: 36px; height: 36px; margin: 0 0 6px 6px; }
.run::after { content: ""; position: absolute; bottom: 6px; left: 23px; width: 8px; height: 4px; border-radius: 2px; background: #999; }
.current::before { content: ""; position: absolute; inset: 5px 2px; background: #2a2a2a; border: 1px solid #333; border-radius: 5px; }
.current svg { position: relative; }
.current::after { content: ""; position: absolute; bottom: 6px; left: 17px; width: 20px; height: 4px; border-radius: 2px; background: #5fb0f0; }
.search { display: flex; align-items: center; width: 273px; height: 38px; margin: 0 3px 0 5px; padding: 0 6px 0 14px; border-radius: 19px; background: #f2f2f2; }
.search input { flex: 1; min-width: 0; padding: 0 0 0 11px; border: 0; background: none; font: 16px/24px "Open Sans", "Noto Sans", sans-serif; }
.search input::placeholder { color: #666; opacity: 1; }
.pre { font: 800 8px "Open Sans", sans-serif; text-anchor: middle; fill: #222; }
.skype { font: bold 19px "Open Sans", sans-serif; text-anchor: middle; fill: #fff; }
.sc { font: bold 11px "Open Sans", sans-serif; text-anchor: middle; fill: #fff; }
.tray { display: flex; align-items: center; gap: 22px; margin-left: auto; padding-right: 27px; }
.lang { width: 40px; margin-left: -2px; text-align: center; }
.net { display: flex; gap: 10px; margin-left: -5px; }
.clock { text-align: right; width: 87px; margin: 0 -10px 0 -12px; }
```
